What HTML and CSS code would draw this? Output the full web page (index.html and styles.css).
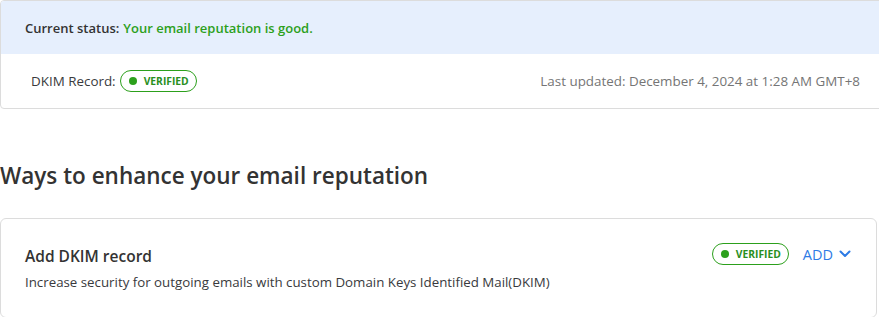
FILE: index.html
```html
<!DOCTYPE html>
<html>
<head>
<meta charset="utf-8">
<link rel="stylesheet" href="styles.css">
</head>
<body>
<div class="page">
  <section class="status-panel">
    <div class="status-bar">
      <span class="status-label">Current status:</span>
      <span class="status-good">Your email reputation is good.</span>
    </div>
    <div class="status-row">
      <div class="record">
        <span class="record-label">DKIM Record:</span>
        <span class="badge"><span class="dot"></span>VERIFIED</span>
      </div>
      <div class="updated">Last updated: December 4, 2024 at 1:28 AM GMT+8</div>
    </div>
  </section>

  <h2 class="section-title">Ways to enhance your email reputation</h2>

  <section class="card">
    <div class="card-text">
      <div class="card-title">Add DKIM record</div>
      <div class="card-desc">Increase security for outgoing emails with custom Domain Keys Identified Mail(DKIM)</div>
    </div>
    <div class="card-actions">
      <span class="badge"><span class="dot"></span>VERIFIED</span>
      <span class="add">ADD
        <svg class="chev" width="12" height="8" viewBox="0 0 12 8"><path d="M1.5 1.5 L6 6 L10.5 1.5" fill="none" stroke="currentColor" stroke-width="2" stroke-linecap="round" stroke-linejoin="round"/></svg>
      </span>
    </div>
  </section>
</div>
</body>
</html>
```

FILE: styles.css
```css
html, body {
  margin: 0;
  padding: 0;
  background: #ffffff;
  overflow: hidden;
}
body {
  font-family: "Open Sans", "Noto Sans", sans-serif;
  color: #333333;
}
.page {
  width: 883px;
}
.status-panel {
  border: 1px solid #dcdcdc;
  border-radius: 4px;
  overflow: hidden;
}
.status-bar {
  background: #e6effd;
  height: 53px;
  display: flex;
  align-items: center;
  padding-left: 24px;
  padding-top: 1px;
  box-sizing: border-box;
  font-size: 13px;
  font-weight: 600;
}
.status-label {
  color: #333333;
  margin-right: 4px;
}
.status-good {
  color: #2ca01c;
}
.status-row {
  height: 54px;
  display: flex;
  align-items: center;
  justify-content: space-between;
  padding: 0 22px 0 30px;
}
.record {
  display: flex;
  align-items: center;
  gap: 4px;
}
.record-label {
  font-size: 13.4px;
  color: #393a3d;
}
.updated {
  font-size: 13.4px;
  color: #757575;
}
.badge {
  display: inline-flex;
  align-items: center;
  box-sizing: border-box;
  height: 22px;
  width: 77px;
  padding-left: 8px;
  border: 1px solid #2ca01c;
  border-radius: 11px;
  font-size: 10.3px;
  font-weight: 700;
  color: #2a8f1e;
}
.dot {
  width: 8px;
  height: 8px;
  border-radius: 50%;
  background: #2ca01c;
  margin-right: 7px;
}
.section-title {
  margin: 51px 0 0 0;
  font-size: 22.5px;
  font-weight: 600;
  color: #333333;
  line-height: 32px;
}
.card {
  margin-top: 26px;
  width: 877px;
  box-sizing: border-box;
  border: 1px solid #dcdcdc;
  border-radius: 6px;
  height: 100px;
  display: flex;
  justify-content: space-between;
  align-items: flex-start;
  padding: 24px 25px 0 24px;
}
.card-text {
  padding-top: 2px;
}
.card-title {
  font-size: 15.5px;
  font-weight: 600;
  color: #333333;
  line-height: 22px;
}
.card-desc {
  margin-top: 6px;
  font-size: 13.3px;
  color: #393a3d;
}
.card-actions {
  display: flex;
  align-items: center;
  gap: 14px;
}
.add {
  display: inline-flex;
  align-items: center;
  gap: 6px;
  color: #2d7be5;
  font-size: 14.5px;
  font-weight: 500;
}
.chev {
  display: block;
}
```
